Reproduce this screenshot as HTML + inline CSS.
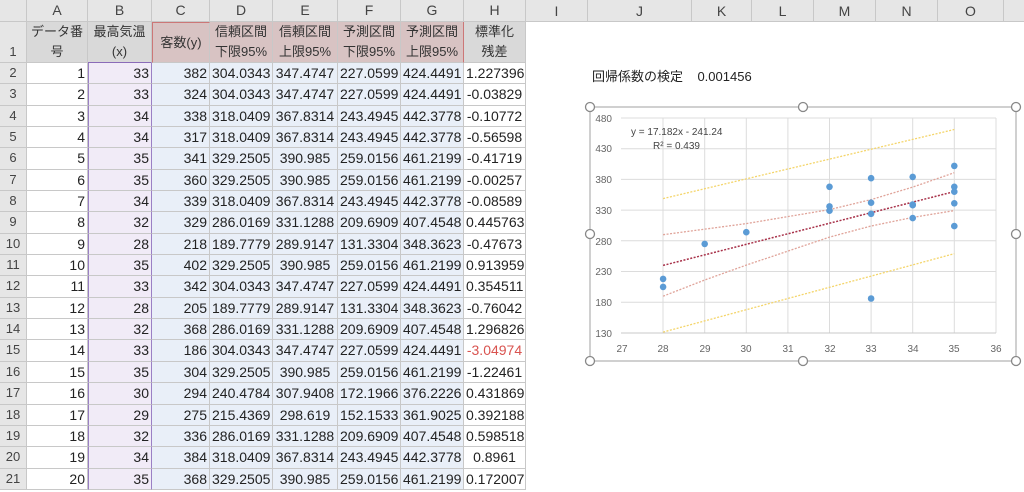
<!DOCTYPE html>
<html><head><meta charset="utf-8"><style>
body{margin:0;width:1024px;height:492px;overflow:hidden;background:#fff;font-family:"Liberation Sans","Noto Sans CJK JP",sans-serif;font-size:14px;color:#222;position:relative}
.g{position:absolute;left:0;top:0;display:grid;grid-template-columns:27px 61px 64px 58px 63px 65px 63px 63px 62px;grid-template-rows:22px 41px repeat(20,21.35px)}
.g div{box-sizing:border-box;border-right:1px solid #c8c8c8;border-bottom:1px solid #c8c8c8;white-space:nowrap;overflow:hidden;line-height:20px;padding:0 2px}
.hd{background:#e6e6e6;color:#444;text-align:center}
.rh{background:#e6e6e6;color:#444;text-align:center;font-size:13px}
.t{background:#d9d9d9;text-align:center;font-size:13px;line-height:20px!important;color:#333}
.tp{background:#d8c3c3}
.a{text-align:right}
.b{background:#f1ebf7;text-align:right}
.c{background:#e9eff8;text-align:right}
.d{background:#e9eff8;text-align:center}
.h{text-align:center}
.r1{display:flex;flex-direction:column;justify-content:center;padding-bottom:0}
.colh{position:absolute;top:0;height:22px;background:#e6e6e6;border-right:1px solid #c8c8c8;border-bottom:1px solid #c8c8c8;box-sizing:border-box;text-align:center;line-height:22px;color:#444}
</style></head><body>
<div class="colh" style="left:526px;width:62px">I</div>
<div class="colh" style="left:588px;width:104px">J</div>
<div class="colh" style="left:692px;width:60px">K</div>
<div class="colh" style="left:752px;width:62px">L</div>
<div class="colh" style="left:814px;width:62px">M</div>
<div class="colh" style="left:876px;width:62px">N</div>
<div class="colh" style="left:938px;width:66px">O</div>
<div class="colh" style="left:1004px;width:20px;border-right:none"></div>
<div class="g" id="g">
<div class="hd" style="background:#e6e6e6"></div><div class="hd">A</div><div class="hd">B</div><div class="hd">C</div><div class="hd">D</div><div class="hd">E</div><div class="hd">F</div><div class="hd">G</div><div class="hd">H</div>
<div class="rh" style="line-height:60px">1</div>
<div class="t r1"><span>データ番</span><span>号</span></div>
<div class="t r1" style="border-bottom:1px solid #8a6bb8"><span>最高気温</span><span>(x)</span></div>
<div class="t tp r1" style="border-top:1px solid #c77;border-left:1px solid #c77"><span>客数(y)</span></div>
<div class="t tp r1"><span>信頼区間</span><span>下限95%</span></div>
<div class="t tp r1"><span>信頼区間</span><span>上限95%</span></div>
<div class="t tp r1"><span>予測区間</span><span>下限95%</span></div>
<div class="t tp r1" style="border-right:1px solid #c77"><span>予測区間</span><span>上限95%</span></div>
<div class="t r1"><span>標準化</span><span>残差</span></div>
</div>
<script>
var d=[[1,33,382,"304.0343","347.4747","227.0599","424.4491","1.227396"],[2,33,324,"304.0343","347.4747","227.0599","424.4491","-0.03829"],[3,34,338,"318.0409","367.8314","243.4945","442.3778","-0.10772"],[4,34,317,"318.0409","367.8314","243.4945","442.3778","-0.56598"],[5,35,341,"329.2505","390.985","259.0156","461.2199","-0.41719"],[6,35,360,"329.2505","390.985","259.0156","461.2199","-0.00257"],[7,34,339,"318.0409","367.8314","243.4945","442.3778","-0.08589"],[8,32,329,"286.0169","331.1288","209.6909","407.4548","0.445763"],[9,28,218,"189.7779","289.9147","131.3304","348.3623","-0.47673"],[10,35,402,"329.2505","390.985","259.0156","461.2199","0.913959"],[11,33,342,"304.0343","347.4747","227.0599","424.4491","0.354511"],[12,28,205,"189.7779","289.9147","131.3304","348.3623","-0.76042"],[13,32,368,"286.0169","331.1288","209.6909","407.4548","1.296826"],[14,33,186,"304.0343","347.4747","227.0599","424.4491","-3.04974"],[15,35,304,"329.2505","390.985","259.0156","461.2199","-1.22461"],[16,30,294,"240.4784","307.9408","172.1966","376.2226","0.431869"],[17,29,275,"215.4369","298.619","152.1533","361.9025","0.392188"],[18,32,336,"286.0169","331.1288","209.6909","407.4548","0.598518"],[19,34,384,"318.0409","367.8314","243.4945","442.3778","0.8961"],[20,35,368,"329.2505","390.985","259.0156","461.2199","0.172007"]];
var h="";d.forEach(function(r,i){h+='<div class="rh">'+(i+2)+'</div><div class="a">'+r[0]+'</div><div class="b" style="border-left:1px solid #9a80c4;border-right:1px solid #9a80c4">'+r[1]+'</div><div class="c">'+r[2]+'</div><div class="d">'+r[3]+'</div><div class="d">'+r[4]+'</div><div class="d">'+r[5]+'</div><div class="d">'+r[6]+'</div><div class="h"'+(i==13?' style="color:#d9534f"':'')+' >'+r[7]+'</div>';});
document.getElementById("g").insertAdjacentHTML("beforeend",h);
</script>
<div style="position:absolute;left:592px;top:66px;font-size:13px;color:#222">回帰係数の検定&nbsp;&nbsp;&nbsp;&nbsp;0.001456</div>
<svg style="position:absolute;left:0;top:0" width="1024" height="492" font-family="Liberation Sans, sans-serif">
<rect x="590" y="107" width="426" height="254" fill="#fff" stroke="#a0a0a0" stroke-width="1"/>
<g stroke="#dcdcdc" stroke-width="1">
<line x1="621" y1="118" x2="996" y2="118"/><line x1="621" y1="148.7" x2="996" y2="148.7"/><line x1="621" y1="179.4" x2="996" y2="179.4"/><line x1="621" y1="210.1" x2="996" y2="210.1"/><line x1="621" y1="240.8" x2="996" y2="240.8"/><line x1="621" y1="271.5" x2="996" y2="271.5"/><line x1="621" y1="302.2" x2="996" y2="302.2"/>
<line x1="663" y1="118" x2="663" y2="333"/><line x1="704.7" y1="118" x2="704.7" y2="333"/><line x1="746.3" y1="118" x2="746.3" y2="333"/><line x1="787.9" y1="118" x2="787.9" y2="333"/><line x1="829.5" y1="118" x2="829.5" y2="333"/><line x1="871.1" y1="118" x2="871.1" y2="333"/><line x1="912.7" y1="118" x2="912.7" y2="333"/><line x1="954.3" y1="118" x2="954.3" y2="333"/><line x1="996" y1="118" x2="996" y2="333"/>
</g>
<line x1="621" y1="333" x2="996" y2="333" stroke="#c8c8c8"/>
<g font-size="10" fill="#666" text-anchor="end">
<text x="612" y="122">480</text><text x="612" y="152">430</text><text x="612" y="183">380</text><text x="612" y="214">330</text><text x="612" y="245">280</text><text x="612" y="275">230</text><text x="612" y="306">180</text><text x="612" y="337">130</text></g>
<g font-size="10" fill="#666" text-anchor="middle">
<text x="622" y="352">27</text><text x="663" y="352">28</text><text x="705" y="352">29</text><text x="746" y="352">30</text><text x="788" y="352">31</text><text x="830" y="352">32</text><text x="871" y="352">33</text><text x="913" y="352">34</text><text x="954" y="352">35</text><text x="996" y="352">36</text></g>
<text x="631" y="135" font-size="10" fill="#444">y = 17.182x - 241.24</text>
<text x="653" y="149" font-size="10" fill="#444">R² = 0.439</text>
<g fill="none" stroke-dasharray="2,1.5" stroke-width="1.3">
<polyline stroke="#f4d56b" points="663.1,198.6 954.3,129.5"/>
<polyline stroke="#f4d56b" points="663.1,332.1 954.3,253.7"/>
<polyline stroke="#e0a49a" points="663.1,234.7 746.3,223.6 829.5,209.6 871.1,199.6 912.7,187.1 954.3,172.7"/>
<polyline stroke="#e0a49a" points="663.1,296.2 704.7,280 746.3,265.1 829.5,237.1 871.1,226 912.7,217.4 954.3,210.6"/>
<polyline stroke="#a8324a" stroke-width="1.5" points="663.1,265.4 954.3,191.6"/>
</g>
<g fill="#5b9bd5">
<circle cx="871.1" cy="178.2" r="3.3"/><circle cx="871.1" cy="213.8" r="3.3"/><circle cx="912.7" cy="205.2" r="3.3"/><circle cx="912.7" cy="218.1" r="3.3"/><circle cx="954.3" cy="203.3" r="3.3"/><circle cx="954.3" cy="191.7" r="3.3"/><circle cx="912.7" cy="204.6" r="3.3"/><circle cx="829.5" cy="210.7" r="3.3"/><circle cx="663.1" cy="278.9" r="3.3"/><circle cx="954.3" cy="165.9" r="3.3"/><circle cx="871.1" cy="202.7" r="3.3"/><circle cx="663.1" cy="286.9" r="3.3"/><circle cx="829.5" cy="186.8" r="3.3"/><circle cx="871.1" cy="298.5" r="3.3"/><circle cx="954.3" cy="226.1" r="3.3"/><circle cx="746.3" cy="232.2" r="3.3"/><circle cx="704.7" cy="243.9" r="3.3"/><circle cx="829.5" cy="206.4" r="3.3"/><circle cx="912.7" cy="176.9" r="3.3"/><circle cx="954.3" cy="186.8" r="3.3"/></g>
<g fill="#fff" stroke="#888" stroke-width="1.3">
<circle cx="590" cy="107" r="4.5"/><circle cx="803" cy="107" r="4.5"/><circle cx="1016" cy="107" r="4.5"/><circle cx="590" cy="234" r="4.5"/><circle cx="1016" cy="234" r="4.5"/><circle cx="590" cy="361" r="4.5"/><circle cx="803" cy="361" r="4.5"/><circle cx="1016" cy="361" r="4.5"/></g>
</svg>
</body></html>
